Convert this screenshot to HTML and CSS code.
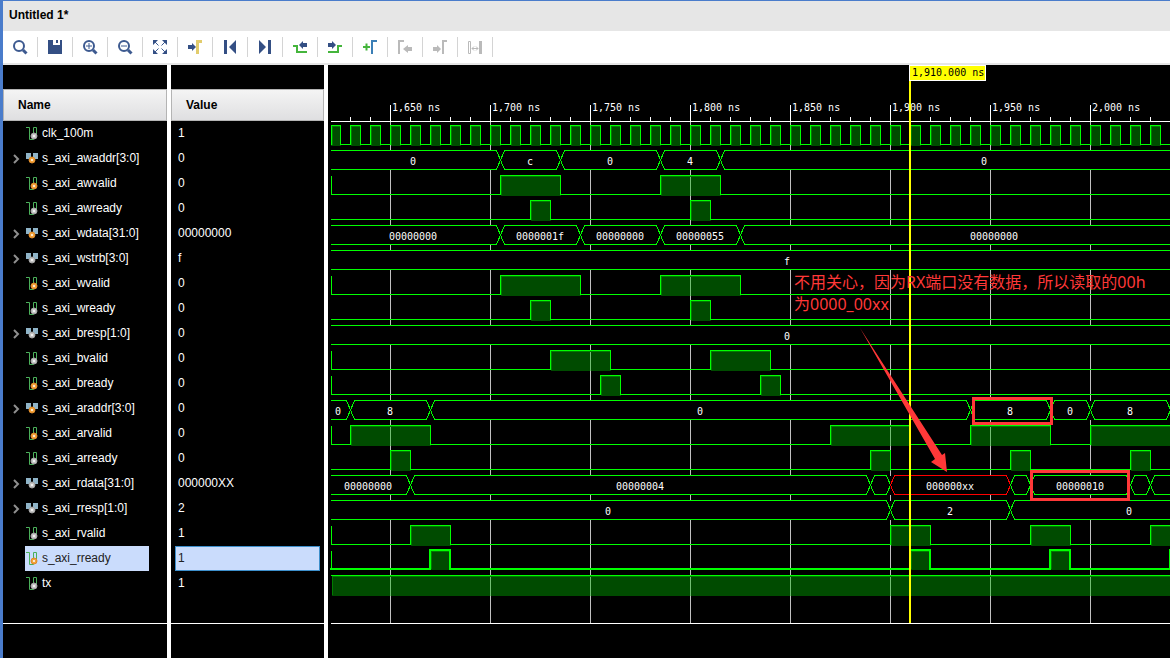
FILE: index.html
```html
<!DOCTYPE html>
<html lang="en">
<head>
<meta charset="utf-8">
<title>Untitled 1*</title>
<link rel="stylesheet" href="styles.css">
</head>
<body>
<div class="window">
  <header class="titlebar"><h1 class="title">Untitled 1*</h1></header>

  <div class="toolbar" role="toolbar" aria-label="Waveform tools">
    <button class="tool" type="button" aria-label="Search"><svg class="icon" viewBox="0 0 16 16"><circle class="line" cx="7" cy="7" r="5"/><path class="line thick" d="M11 11L14.5 14.5"/></svg></button>
    <button class="tool" type="button" aria-label="Save"><svg class="icon" viewBox="0 0 16 16"><path class="navy" d="M1 1H6V6H13V1H15V15H1Z"/><path class="navy" d="M9 1H11V4H9Z"/></svg></button>
    <button class="tool" type="button" aria-label="Zoom in"><svg class="icon" viewBox="0 0 16 16"><circle class="line" cx="7" cy="7" r="5"/><path class="line thick" d="M11 11L14.5 14.5"/><path class="line" d="M4 7H10M7 4V10"/></svg></button>
    <button class="tool" type="button" aria-label="Zoom out"><svg class="icon" viewBox="0 0 16 16"><circle class="line" cx="7" cy="7" r="5"/><path class="line thick" d="M11 11L14.5 14.5"/><path class="line" d="M4 7H10"/></svg></button>
    <button class="tool" type="button" aria-label="Zoom fit"><svg class="icon" viewBox="0 0 16 16"><path class="navy" d="M1 1H6L1 6ZM15 1V6L10 1ZM1 15V10L6 15ZM15 15H10L15 10Z"/><path class="line" d="M3 3L6.500 6.500M13 3L9.500 6.500M3 13L6.500 9.500M13 13L9.500 9.500"/></svg></button>
    <button class="tool" type="button" aria-label="Go to cursor"><svg class="icon" viewBox="0 0 16 16"><path class="navy" d="M1 6H5V4L9 8L5 12V10H1Z"/><path class="gold" d="M9 1H15V4H12V15H9Z"/></svg></button>
    <button class="tool" type="button" aria-label="Go to start"><svg class="icon" viewBox="0 0 16 16"><path class="navy" d="M2 1H5V15H2ZM14 1V15L7 8Z"/></svg></button>
    <button class="tool" type="button" aria-label="Go to end"><svg class="icon" viewBox="0 0 16 16"><path class="navy" d="M11 1H14V15H11ZM2 1V15L9 8Z"/></svg></button>
    <button class="tool" type="button" aria-label="Previous transition"><svg class="icon" viewBox="0 0 16 16"><path class="edge" d="M1 7H5V13H15"/><path class="navy" d="M15 4H11V2L7 6L11 10V8H15Z"/></svg></button>
    <button class="tool" type="button" aria-label="Next transition"><svg class="icon" viewBox="0 0 16 16"><path class="edge" d="M1 13H11V7H15"/><path class="navy" d="M1 4H5V2L9 6L5 10V8H1Z"/></svg></button>
    <button class="tool" type="button" aria-label="Add marker"><svg class="icon" viewBox="0 0 16 16"><path class="edge" d="M1 8H8M4.500 4.500V11.500"/><path class="blue" d="M9 1H15V3H11V15H9Z"/></svg></button>
    <button class="tool" type="button" aria-label="Previous marker" disabled><svg class="icon" viewBox="0 0 16 16"><path class="grey" d="M1 1H7V3H3V15H1ZM15 8H11V6L6 10L11 14V12H15Z"/></svg></button>
    <button class="tool" type="button" aria-label="Next marker" disabled><svg class="icon" viewBox="0 0 16 16"><path class="grey" d="M10 1H15V3H12V15H10ZM1 8H5V6L9 10L5 14V12H1Z"/></svg></button>
    <button class="tool" type="button" aria-label="Swap cursors" disabled><svg class="icon" viewBox="0 0 16 16"><path class="grey" d="M12 2H15V15H12Z"/><path class="thin" d="M1.500 2.500H3.500V14.500H1.500ZM5 9.500H11M7 7.500L5 9.500L7 11.500M9 7.500L11 9.500L9 11.500"/></svg></button>
  </div>

  <main class="panes">
    <section class="pane">
      <h2 class="head">Name</h2>
      <ul class="rows" id="names"></ul>
    </section>
    <section class="pane">
      <h2 class="head">Value</h2>
      <ul class="rows" id="values"></ul>
    </section>
    <section class="wave" aria-label="Waveform">
      <svg class="plot" id="plot"></svg>
      <p class="note" lang="zh">不用关心，因为RX端口没有数据，所以读取的00h<br>为0000_00xx</p>
    </section>
  </main>
</div>
<script src="wave.js"></script>
</body>
</html>
```

FILE: styles.css
```css
* {
  box-sizing: border-box;
}

body {
  margin: 0;
  background: #000;
  color: #fff;
  font: 12px/25px "Liberation Sans", Arial, sans-serif;
}

.window {
  display: flex;
  flex-direction: column;
  min-height: 100vh;
  border-left: 3px solid #4a7ccb;
  border-top: 1px solid #4a7ccb;
}

.titlebar {
  height: 30px;
  padding: 0 6px;
  background: #e6e6e6;
}

.title {
  margin: 0;
  color: #000;
  font-size: 12px;
  line-height: 28px;
}

.toolbar {
  display: flex;
  align-items: center;
  height: 34px;
  background: #fff;
  border-bottom: 2px solid #e6e6e6;
}

.tool {
  display: flex;
  align-items: center;
  justify-content: center;
  width: 35px;
  height: 20px;
  padding: 0;
  border: 0;
  border-right: 1px solid #d4d4d4;
  background: none;
}

.icon {
  width: 16px;
  height: 16px;
  flex: none;
}

.navy { fill: #344f84; }
.gold { fill: #e2cc6c; }
.blue { fill: #3b7fb6; }
.grey { fill: #bababa; }
.line { fill: none; stroke: #3d5a90; stroke-width: 2; }
.icon path.line { stroke-width: 1; }
.icon path.thick { stroke-width: 3; }
.edge { fill: none; stroke: #45b53c; stroke-width: 2; }
.thin { fill: none; stroke: #bababa; }

.panes {
  flex: 1;
  display: grid;
  grid-template-columns: 164px 153px minmax(0, 1fr);
  column-gap: 4px;
  background: #fff;
}

.pane {
  padding-top: 24px;
  background: #000;
}

.head {
  height: 32px;
  margin: 0;
  padding: 0 14px;
  border: 1px solid #b4b4b4;
  background: linear-gradient(#f4f4f4, #dfdfe1);
  color: #000;
  font-size: 12px;
  line-height: 30px;
}

.rows {
  margin: 0;
  padding: 0 4px 27px;
  border-bottom: 1px solid #fff;
  list-style: none;
}

.row {
  display: flex;
  align-items: center;
  height: 25px;
}

.chevron {
  width: 18px;
  height: 10px;
}

.chevron path {
  fill: none;
  stroke: #8f8f8f;
  stroke-width: 2;
}

.signal {
  display: flex;
  align-items: center;
  gap: 4px;
  height: 25px;
  padding-left: 1px;
}

.selected .signal {
  width: 124px;
  background: #cadcfc;
  color: #222;
}

.kind {
  width: 12px;
  height: 14px;
}

.kind .step { fill: none; stroke: #4bb05a; stroke-width: 1; }
.kind .bus { fill: #8fb4c8; }
.kind .out { fill: #c4c4c4; stroke: #a2a2a2; }
.kind .in { fill: #f2a33c; stroke: #e08a28; }
.kind .dot { fill: #fff; }

.value {
  padding: 0 3px;
}

.value.selected {
  padding: 0 2px;
  border: 1px solid #3d8fcb;
  background: #cadcfc;
  color: #222;
}

.wave {
  position: relative;
  display: flex;
  min-height: 559px;
  background: #000;
}

.plot {
  position: absolute;
  width: 100%;
  height: 100%;
  font: 10px "DejaVu Sans Mono", monospace;
  shape-rendering: crispEdges;
}

.axis { fill: none; stroke: #fff; }
.grid { fill: none; stroke: #c0c0c0; }
.label { fill: #fff; }
.mid { text-anchor: middle; }
.fill { fill: #00bb00; fill-opacity: 0.4; }
.bevel { fill: none; stroke: #007c00; }
.trace { fill: none; stroke: #00ff00; }
.trace.bold { stroke-width: 2; }
.trace.unknown { stroke: #ff0000; }
.cover { fill: #000; }
.cursor { stroke: #ffff00; stroke-width: 2; }
.flag { fill: #ffff00; stroke: #fff; }
.flag-text { fill: #000; }
.box { fill: none; stroke: #ff3838; stroke-width: 3; }
.arrow { fill: #ff3838; shape-rendering: auto; }

.note {
  position: absolute;
  left: 466px;
  top: 206px;
  margin: 0;
  color: #ff3838;
  font: 16px/22px "Noto Sans", "Noto Sans CJK SC", sans-serif;
  white-space: nowrap;
}
```

FILE: wave.js
```js
// Times are in nanoseconds. A bit lists its high intervals, a bus its [start, label] segments.
const SIGNALS = [
  { name: "clk_100m", value: "1", clock: true },
  { name: "s_axi_awaddr[3:0]", value: "0", input: true, bus: [[1618, "0"], [1705, "c"], [1735, "0"], [1785, "4"], [1815, "0"]] },
  { name: "s_axi_awvalid", value: "0", input: true, stem: true, high: [[1705, 1735], [1785, 1815]] },
  { name: "s_axi_awready", value: "0", high: [[1720, 1730], [1800, 1810]] },
  { name: "s_axi_wdata[31:0]", value: "00000000", input: true, bus: [[1618, "00000000"], [1705, "0000001f"], [1745, "00000000"], [1785, "00000055"], [1825, "00000000"]] },
  { name: "s_axi_wstrb[3:0]", value: "f", bus: [[1618, "f"]] },
  { name: "s_axi_wvalid", value: "0", input: true, stem: true, high: [[1705, 1745], [1785, 1825]] },
  { name: "s_axi_wready", value: "0", high: [[1720, 1730], [1800, 1810]] },
  { name: "s_axi_bresp[1:0]", value: "0", bus: [[1618, "0"]] },
  { name: "s_axi_bvalid", value: "0", stem: true, high: [[1730, 1760], [1810, 1840]] },
  { name: "s_axi_bready", value: "0", input: true, stem: true, high: [[1755, 1765], [1835, 1845]] },
  { name: "s_axi_araddr[3:0]", value: "0", input: true, bus: [[1618, "0"], [1630, "8"], [1670, "0"], [1940, "8"], [1980, "0"], [2000, "8"], [2040, ""]] },
  { name: "s_axi_arvalid", value: "0", input: true, stem: true, high: [[1630, 1670], [1870, 1910], [1940, 1980], [2000, 2040]] },
  { name: "s_axi_arready", value: "0", high: [[1650, 1660], [1890, 1900], [1960, 1970], [2020, 2030]] },
  { name: "s_axi_rdata[31:0]", value: "000000XX", bus: [[1618, "00000000"], [1660, "00000004"], [1890, ""], [1900, "000000xx", true], [1960, ""], [1970, "00000010"], [2020, ""], [2030, ""]] },
  { name: "s_axi_rresp[1:0]", value: "2", bus: [[1618, "0"], [1900, "2"], [1960, "0"]] },
  { name: "s_axi_rvalid", value: "1", stem: true, high: [[1660, 1680], [1900, 1920], [1970, 1990], [2030, 2050]] },
  { name: "s_axi_rready", value: "1", input: true, stem: true, selected: true, high: [[1670, 1680], [1910, 1920], [1980, 1990], [2040, 2050]] },
  { name: "tx", value: "1", constant: true }
];

const END = 2079;
const LEFT = 3;
const LABEL_WIDTH = 50;
const plot = document.getElementById("plot");
const x = t => 62.5 + (t - 1650) * 2;
let far = 0;

// Name and value columns
function kindIcon(s) {
  const role = s.input ? "in" : "out";
  const bus = Boolean(s.bus);
  const cx = bus ? 6 : 8;
  const cy = bus ? 8 : 9;
  const shape = bus
    ? '<path class="bus" d="M0 1H5V5H7V1H12V7H9V9H3V7H0Z"/>'
    : '<path class="step" d="M0 .5H3.500V12.500H7.500V.5H10.500V8"/>';
  return `<svg class="kind" viewBox="0 0 12 14">${shape}<circle class="${role}" cx="${cx}" cy="${cy}" r="3"/><circle class="dot" cx="${cx}" cy="${cy}" r="1"/></svg>`;
}

document.getElementById("names").innerHTML = SIGNALS.map(s => {
  const arrow = s.bus ? '<path d="M7 1L11 5L7 9"/>' : "";
  return `<li class="row${s.selected ? " selected" : ""}"><svg class="chevron" viewBox="0 0 18 10">${arrow}</svg><span class="signal">${kindIcon(s)}<span>${s.name}</span></span></li>`;
}).join("");

document.getElementById("values").innerHTML = SIGNALS.map(s =>
  `<li class="row value${s.selected ? " selected" : ""}">${s.value}</li>`
).join("");

// Time axis and grid
function drawAxis() {
  let ticks = `M${LEFT} 56.5H${far}`;
  let grid = "";
  let labels = "";
  for (let t = 1620; x(t) < far; t += 10) {
    const major = t % 50 === 0;
    if (t > 1620) ticks += `M${x(t)} ${major ? 40 : 52}V56`;
    if (major) {
      grid += `M${x(t)} 57V558`;
      if (x(t) + LABEL_WIDTH < far) {
        labels += `<text class="label" x="${x(t) + 1.5}" y="46">${t.toLocaleString("en-US")} ns</text>`;
      }
    }
  }
  return `<path class="grid" d="${grid}"/><path class="axis" d="${ticks}M${LEFT} 558.5H${far}"/>${labels}`;
}

function drawBit(s, top, low) {
  let line = `M${s.selected ? 2 : LEFT} ${low}`;
  let fills = "";
  let bevel = "";
  for (const [a, b] of s.high) {
    const l = Math.max(x(a), LEFT);
    line += `H${l}V${top}H${x(b)}V${low}`;
    fills += `<rect class="fill" x="${l}" y="${top}" width="${x(b) - l}" height="20"/>`;
    bevel += `M${l + 1} ${low}V${top + 1}H${x(b)}`;
  }
  if (x(s.high[s.high.length - 1][1]) < far) line += `H${far}`;
  const shift = s.selected ? ' transform="translate(-.5 -.5)"' : "";
  const stem = s.stem ? `<path class="trace" d="M3.500 ${top}V${low}"/>` : "";
  return `<g${shift}>${fills}<path class="bevel" d="${bevel}"/><path class="trace${s.selected ? " bold" : ""}" d="${line}"/></g>${stem}`;
}

function drawBus(s, top, low) {
  let out = `<rect class="cover" x="${LEFT}" y="${top}" width="${far}" height="19"/>`;
  const mid = (top + low) / 2;
  s.bus.forEach(([t, label, unknown], i) => {
    const next = s.bus[i + 1];
    const l = i ? x(t) : LEFT;
    const r = next ? x(next[0]) : Math.max(far, l + 8);
    const a = i ? l + 4 : l;
    const b = next ? r - 4 : r;
    const open = i ? `M${l} ${mid}L${a} ${top}` : `M${l} ${top}`;
    const close = next ? `L${r} ${mid}L${b} ${low}` : `M${r} ${low}`;
    const back = i ? `H${a}L${l} ${mid}` : `H${l}`;
    out += `<path class="trace${unknown ? " unknown" : ""}" d="${open}H${b}${close}${back}"/>`;
    if (!label) return;
    const centre = (x(t) + x(next ? next[0] : END)) / 2;
    out += `<text class="label mid" x="${Math.floor(centre)}" y="${top + 14.5}">${label}</text>`;
  });
  return out;
}

function drawSignal(s, i) {
  const top = 60.5 + i * 25;
  const low = top + 19;
  if (s.bus) return drawBus(s, top, low);
  if (s.constant) {
    return `<rect class="fill" x="4" y="${top}" width="${far}" height="20"/><path class="bevel" d="M4.500 ${low}V${top + 1}H${far}"/><path class="trace" d="M${LEFT} ${top}H${far}"/>`;
  }
  if (s.clock) {
    const high = [];
    for (let t = 1620; x(t) < far; t += 10) high.push([t, t + 5]);
    return drawBit({ high }, top, low);
  }
  return drawBit(s, top, low);
}

const cursor = '<path class="cursor" d="M582 0V558"/><rect class="flag" x="581.5" y="0.5" width="76" height="15"/><text class="flag-text" x="584" y="11">1,910.000 ns</text>';
const marks = '<rect class="box" x="645.5" y="333.5" width="78" height="25"/><rect class="box" x="703.5" y="406.5" width="97" height="28"/><path class="arrow" d="M532 263L614 390L617 388L619 407L603 397L607 394Z"/>';

function draw() {
  far = plot.parentElement.clientWidth;
  plot.innerHTML = drawAxis() + SIGNALS.map(drawSignal).join("") + cursor + marks;
}

draw();
window.addEventListener("resize", draw);
```
